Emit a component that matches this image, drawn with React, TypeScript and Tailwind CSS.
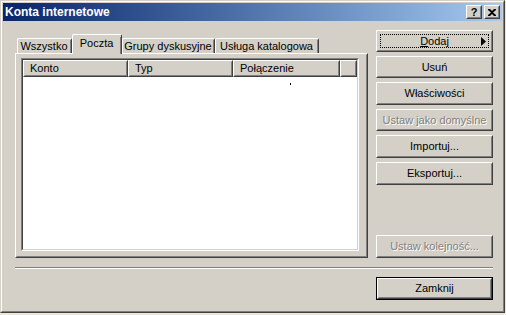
import React from "react";

const FONT = { fontFamily: '"Liberation Sans", Arial, sans-serif' };

function Bevel({ children, className = "" }: { children: React.ReactNode; className?: string }) {
  return (
    <div className={`border border-t-white border-l-white border-r-[#404040] border-b-[#404040] ${className}`}>
      <div className="h-full w-full border border-t-[#d4d0c8] border-l-[#d4d0c8] border-r-[#808080] border-b-[#808080]">
        {children}
      </div>
    </div>
  );
}

function Button({ label, disabled, className = "" }: { label: React.ReactNode; disabled?: boolean; className?: string }) {
  return (
    <Bevel className={`h-[23px] ${className}`}>
      <div
        className={`flex h-full items-center justify-center text-[11px] ${
          disabled ? "text-[#808080] [text-shadow:1px_1px_0_#ffffff]" : "text-black"
        }`}
      >
        {label}
      </div>
    </Bevel>
  );
}

const TABS = [
  { label: "Wszystko", w: "w-[55px]" },
  { label: "Poczta", w: "w-[50px]", active: true },
  { label: "Grupy dyskusyjne", w: "w-[93px]" },
  { label: "Usługa katalogowa", w: "w-[104px]" },
];

const COLUMNS = [
  { label: "Konto", w: "w-[105px]" },
  { label: "Typ", w: "w-[105px]" },
  { label: "Połączenie", w: "w-[107px]" },
  { label: "", w: "flex-1" },
];

export default function App() {
  return (
    <div className="w-[506px] h-[315px] bg-[#ece8dc] overflow-hidden" style={FONT}>
      {/* window frame */}
      <div className="w-[505px] h-[313px] border border-t-[#d4d0c8] border-l-[#d4d0c8] border-r-[#404040] border-b-[#404040]">
        <div className="h-full border border-t-white border-l-white border-r-[#808080] border-b-[#808080] bg-[#d4d0c8] p-px flex flex-col">
          {/* title bar */}
          <div className="h-[18px] flex items-center bg-gradient-to-r from-[#0a246a] to-[#a6caf0] pl-[2px] pr-[2px]">
            <span className="text-[12px] font-bold text-white leading-none">Konta internetowe</span>
            <div className="ml-auto flex gap-[2px]">
              <Bevel className="w-[16px] h-[14px] bg-[#d4d0c8]">
                <div className="flex h-full items-center justify-center text-[11px] font-bold leading-none text-black">?</div>
              </Bevel>
              <Bevel className="w-[16px] h-[14px] bg-[#d4d0c8]">
                <div className="flex h-full items-center justify-center">
                  <svg width="8" height="7" viewBox="0 0 8 7">
                    <path d="M0 0h2l2 2 2-2h2v1L5 3.5 8 6v1H6L4 5 2 7H0V6l3-2.5L0 1z" fill="#000" />
                  </svg>
                </div>
              </Bevel>
            </div>
          </div>

          {/* client area */}
          <div className="flex-1 flex flex-col text-[11px] text-black">
            <div className="flex h-[237px]">
              {/* tab control */}
              <div className="ml-[12px] mt-[13px] w-[353px] flex flex-col">
                <div className="h-[19px] flex items-end pl-[2px]">
                  {TABS.map((t) => (
                    <div
                      key={t.label}
                      className={`${t.w} ${
                        t.active ? "h-[20px] -mb-px z-10 pt-[2px]" : "h-[15px] pt-px"
                      } bg-[#d4d0c8] border-t border-l border-r border-t-white border-l-white border-r-[#404040] rounded-t-[2px] flex justify-center`}
                    >
                      <div className="h-full w-full border-r border-r-[#808080] flex justify-center">
                        <span className="leading-[12px]">{t.label}</span>
                      </div>
                    </div>
                  ))}
                </div>
                <div className="flex-1 border border-t-white border-l-white border-r-[#404040] border-b-[#404040]">
                  <div className="h-full border border-t-[#d4d0c8] border-l-[#d4d0c8] border-r-[#808080] border-b-[#808080] pl-[4px] pt-[3px]">
                    {/* list view */}
                    <div className="relative w-[338px] h-[193px] border border-t-[#808080] border-l-[#808080] border-r-white border-b-white">
                      <div className="h-full border border-t-[#404040] border-l-[#404040] border-r-[#d4d0c8] border-b-[#d4d0c8] bg-white">
                        <div className="flex h-[17px]">
                          {COLUMNS.map((c, i) => (
                            <Bevel key={i} className={`${c.w} h-[17px] bg-[#d4d0c8]`}>
                              <div className="h-full flex items-center pl-[5px] leading-none">{c.label}</div>
                            </Bevel>
                          ))}
                        </div>
                      </div>
                      <div className="absolute left-[268px] top-[24px] w-px h-[2px] bg-black" />
                    </div>
                  </div>
                </div>
              </div>

              {/* right buttons */}
              <div className="ml-[8px] w-[117px] pt-[9px] flex flex-col justify-between">
                <div className="flex flex-col gap-[4px]">
                  <Bevel className="h-[22px]">
                    <div className="relative h-full flex items-center justify-center">
                      <div className="absolute inset-[2px] border border-dotted border-black" />
                      <span>
                        <span className="underline">D</span>odaj
                      </span>
                      <svg className="absolute right-[5px] top-[5px]" width="5" height="9" viewBox="0 0 5 9">
                        <path d="M0 0l5 4.5L0 9z" fill="#000" />
                      </svg>
                    </div>
                  </Bevel>
                  <Button label="Usuń" className="!h-[22px]" />
                  <Button label="Właściwości" />
                  <Button label="Ustaw jako domyślne" disabled className="!h-[22px]" />
                  <Button label="Importuj..." />
                  <Button label="Eksportuj..." />
                </div>
                <Button label="Ustaw kolejność..." disabled />
              </div>
            </div>

            {/* separator */}
            <div className="ml-[12px] mt-[9px] w-[478px] border-t border-b border-t-[#808080] border-b-white" />

            {/* bottom button */}
            <div className="flex justify-end pr-[9px] mt-[8px]">
              <div className="w-[117px] h-[23px] border border-black">
                <Bevel className="h-full">
                  <div className="flex h-full items-center justify-center">Zamknij</div>
                </Bevel>
              </div>
            </div>
          </div>
        </div>
      </div>
    </div>
  );
}
